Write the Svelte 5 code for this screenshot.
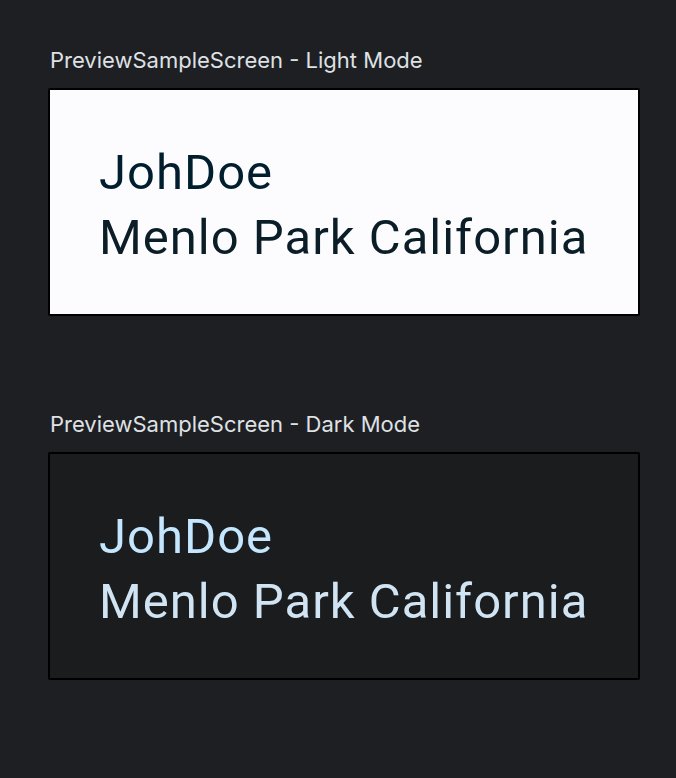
<script>
  const previews = [
    { mode: 'light', title: 'PreviewSampleScreen - Light Mode' },
    { mode: 'dark', title: 'PreviewSampleScreen - Dark Mode' }
  ];
</script>

<main>
  {#each previews as preview}
    <section class={preview.mode}>
      <h2>{preview.title}</h2>
      <div class="screen">
        <p class="name">JohDoe</p>
        <p class="place">Menlo Park California</p>
      </div>
    </section>
  {/each}
</main>

<style>
  :global(body) {
    margin: 0;
    background: #1e1f22;
  }
  main {
    display: flex;
    flex-direction: column;
    gap: 92px;
    padding: 44px 36px 44px 48px;
  }
  h2 {
    margin: 0 0 12px;
    padding-left: 2px;
    color: #dfe1e5;
    font: 400 22px/32px Inter, sans-serif;
  }
  .screen {
    padding: 50px 49px 44px;
    border: 2px solid #000;
    border-radius: 2px;
    font: 400 49px/65px Roboto, sans-serif;
    letter-spacing: 1px;
    white-space: nowrap;
  }
  p {
    margin: 0;
  }
  .light .screen {
    background: #fcfcff;
  }
  .light .name {
    color: #001e2d;
  }
  .light .place {
    color: #0b1d26;
  }
  .dark .screen {
    background: #1b1c1d;
  }
  .dark .name {
    color: #c4e7ff;
  }
  .dark .place {
    color: #d1e4f4;
  }
</style>
